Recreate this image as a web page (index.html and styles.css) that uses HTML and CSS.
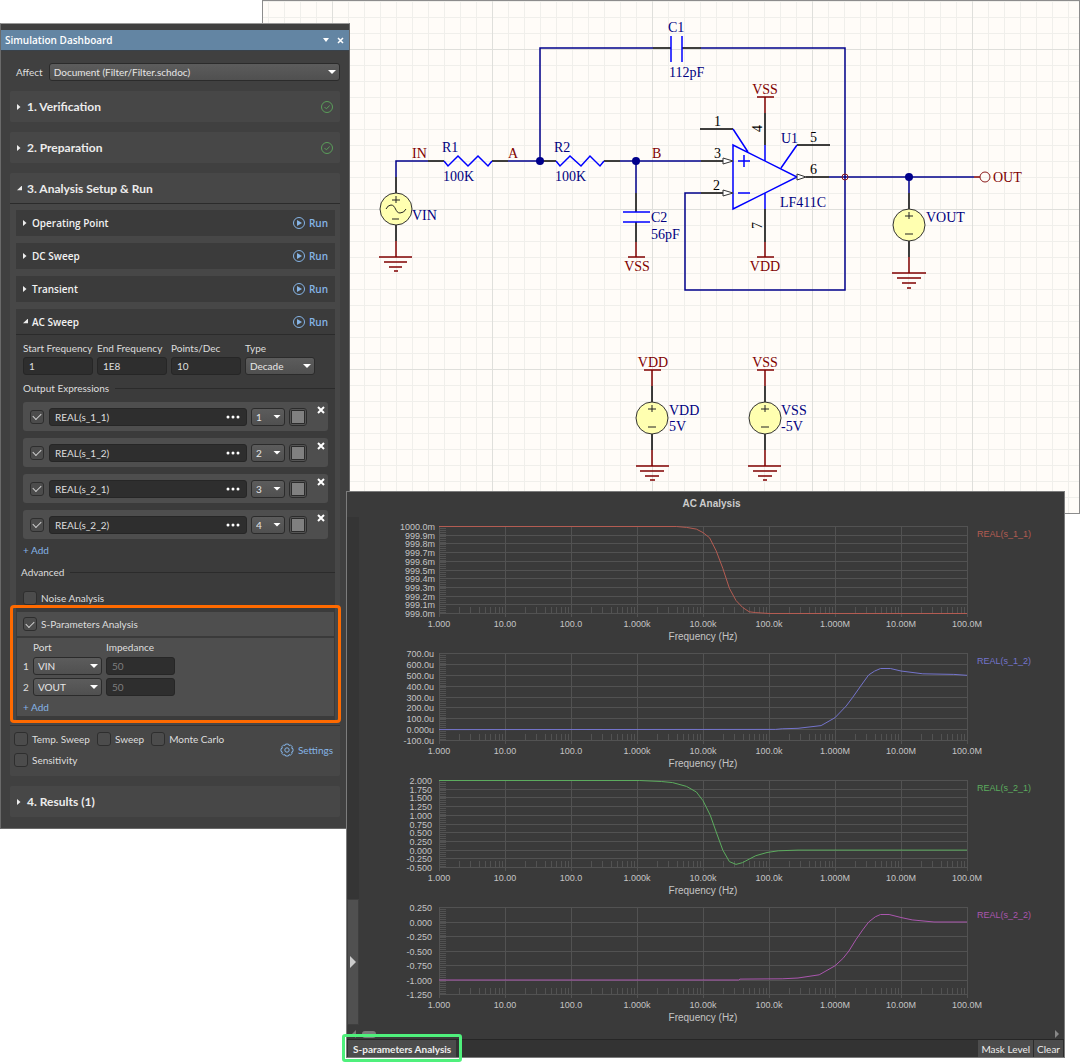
FILE: index.html
```html
<!DOCTYPE html>
<html lang="en">
<head>
<meta charset="utf-8">
<title>Simulation Dashboard</title>
<link rel="stylesheet" href="styles.css">
</head>
<body>
<main class="desktop">

<section class="schematic" aria-label="Schematic">
<svg class="sheet" width="816" height="512" viewBox="263 1 816 512">
  <g class="wire">
    <path d="M396 177V161H428M508 161H540M540 161V48H653M701 48H845V290H685V193H701M620 161H701M636 161V193M829 177H974M909 177V193"/>
  </g>
  <g class="pin">
    <path d="M396 177V193M396 225V241M428 161H444M492 161H508M540 161H556M604 161H620M653 48H671M682 48H701M636 193V212M636 222V242"/>
    <path d="M700 129H733M701 161H723M701 193H723M765 113V145M765 209V242M797 145H830M806 177H829"/>
    <path d="M909 193V209M909 241V257M652 386V402M652 434V450M765 386V402M765 434V450"/>
  </g>
  <g class="part">
    <path d="M444 161L448 166L458 156L468 166L478 156L488 166L492 161"/>
    <path d="M556 161L560 166L570 156L581 166L590 156L600 166L604 161"/>
    <path d="M671 36V62M682 36V62M623 212H650M623 222H650"/>
    <path d="M733 145V209L797 177ZM733 129L748 152M765 145V161M765 193V209M781 168L797 145M738 161H750M744 155V167M738 193H750"/>
  </g>
  <g class="power">
    <path d="M396 241V257M379 257H412M384 262H407M389 267H402M394 271H398"/>
    <path d="M636 242V257M628 257H645M765 113V97M757 97H774M765 242V257M757 257H774M974 177H980"/>
    <path d="M909 257V273M892 273H926M897 278H921M902 283H916M907 288H911"/>
    <path d="M652 386V370M644 370H661M652 450V466M636 466H669M640 471H664M645 476H659M650 480H655"/>
    <path d="M765 386V370M757 370H774M765 450V466M748 466H781M753 471H777M758 476H772M763 480H767"/>
  </g>
  <g class="source">
    <circle cx="396" cy="209" r="16"/><circle cx="909" cy="225" r="16"/><circle cx="652" cy="418" r="16"/><circle cx="765" cy="418" r="16"/>
    <path d="M396 196V203M392 200H400M392 219H399M386 209Q388 205 391 205C396 205 395 213 400 213Q404 213 406 209"/>
    <path d="M909 212V219M905 216H913M905 234H913M652 405V412M648 409H656M648 427H656M765 405V412M761 409H769M761 427H769"/>
  </g>
  <g class="arrow">
    <path d="M723 158L733 161L723 164ZM723 190L733 193L723 196ZM797 174L806 177L797 180Z"/>
  </g>
  <g class="port"><circle cx="985" cy="177" r="5"/><circle cx="845" cy="177" r="3"/></g>
  <g class="dot"><circle cx="540" cy="161" r="4"/><circle cx="636" cy="161" r="4"/><circle cx="909" cy="177" r="4"/></g>
  <g class="name">
    <text x="668" y="32">C1</text><text x="669" y="77">112pF</text>
    <text x="442" y="152">R1</text><text x="443" y="181">100K</text>
    <text x="554" y="152">R2</text><text x="555" y="181">100K</text>
    <text x="412" y="220">VIN</text><text x="651" y="222">C2</text><text x="651" y="239">56pF</text>
    <text x="781" y="143">U1</text><text x="780" y="207">LF411C</text><text x="926" y="222">VOUT</text>
    <text x="669" y="415">VDD</text><text x="669" y="431">5V</text>
    <text x="781" y="415">VSS</text><text x="781" y="431">-5V</text>
  </g>
  <g class="net">
    <text x="412" y="158">IN</text><text x="508" y="158">A</text><text x="652" y="158">B</text>
    <text x="993" y="182">OUT</text>
    <g text-anchor="middle">
      <text x="637" y="271">VSS</text><text x="765" y="94">VSS</text><text x="765" y="271">VDD</text>
      <text x="653" y="367">VDD</text><text x="765" y="367">VSS</text>
    </g>
  </g>
  <g class="pin-no">
    <text x="714" y="126">1</text><text x="714" y="158">3</text><text x="713" y="190">2</text>
    <text x="810" y="142">5</text><text x="810" y="174">6</text>
    <text transform="translate(762 132) rotate(-90)">4</text>
    <text transform="translate(762 229) rotate(-90)">7</text>
  </g>
</svg>
</section>

<section class="dashboard">
  <header class="titlebar">
    <h1>Simulation Dashboard</h1>
    <button class="plain" aria-label="Panel menu"><svg width="8" height="8"><path d="M1 2H7L4 6Z" fill="#fff"/></svg></button>
    <button class="plain" aria-label="Close panel"><svg width="8" height="8"><path d="M2 2L7 7M7 2L2 7" stroke="#fff" stroke-width="1.5"/></svg></button>
  </header>

  <div class="stack">
    <div class="affect">
      <label for="affect">Affect</label>
      <span class="select wide"><select id="affect"><option>Document (Filter/Filter.schdoc)</option></select></span>
    </div>

    <div class="section"><button class="head"><i class="closed"></i><span>1. Verification</span>
      <svg width="14" height="14" class="ok"><circle cx="7" cy="7" r="5.5"/><path d="M4.5 7L6.3 8.8L9.7 5.6"/></svg></button></div>
    <div class="section"><button class="head"><i class="closed"></i><span>2. Preparation</span>
      <svg width="14" height="14" class="ok"><circle cx="7" cy="7" r="5.5"/><path d="M4.5 7L6.3 8.8L9.7 5.6"/></svg></button></div>

    <div class="section">
      <button class="head lined"><i class="open"></i><span>3. Analysis Setup &amp; Run</span></button>
      <div class="analyses">
        <div class="item"><div class="item-head"><i class="closed"></i><h3>Operating Point</h3><button class="run"><svg width="14" height="14"><circle cx="7" cy="7" r="5.5"/><path d="M5 4L10 7L5 10Z"/></svg>Run</button></div></div>
        <div class="item"><div class="item-head"><i class="closed"></i><h3>DC Sweep</h3><button class="run"><svg width="14" height="14"><circle cx="7" cy="7" r="5.5"/><path d="M5 4L10 7L5 10Z"/></svg>Run</button></div></div>
        <div class="item"><div class="item-head"><i class="closed"></i><h3>Transient</h3><button class="run"><svg width="14" height="14"><circle cx="7" cy="7" r="5.5"/><path d="M5 4L10 7L5 10Z"/></svg>Run</button></div></div>
        <div class="item">
          <div class="item-head lined"><i class="open"></i><h3>AC Sweep</h3><button class="run"><svg width="14" height="14"><circle cx="7" cy="7" r="5.5"/><path d="M5 4L10 7L5 10Z"/></svg>Run</button></div>
          <div class="fields">
            <div class="field"><label for="start">Start Frequency</label><input class="text" id="start" value="1"></div>
            <div class="field"><label for="end">End Frequency</label><input class="text" id="end" value="1E8"></div>
            <div class="field"><label for="points">Points/Dec</label><input class="text" id="points" value="10"></div>
            <div class="field"><label for="type">Type</label><span class="select"><select id="type"><option>Decade</option></select></span></div>
          </div>
          <h4 class="rule">Output Expressions</h4>
          <div class="exprs">
            <div class="expr"><input type="checkbox" checked aria-label="Use expression 1"><span class="combo"><input aria-label="Expression 1" value="REAL(s_1_1)"><button class="plain" aria-label="Edit expression 1"><svg width="14" height="4"><circle cx="2" cy="2" r="1.5"/><circle cx="7" cy="2" r="1.5"/><circle cx="12" cy="2" r="1.5"/></svg></button></span><span class="select small"><select aria-label="Plot 1"><option>1</option></select></span><button class="swatch" aria-label="Color 1"></button><button class="plain remove" aria-label="Remove expression 1"><svg width="10" height="10"><path d="M2 2L8 8M8 2L2 8"/></svg></button></div>
            <div class="expr"><input type="checkbox" checked aria-label="Use expression 2"><span class="combo"><input aria-label="Expression 2" value="REAL(s_1_2)"><button class="plain" aria-label="Edit expression 2"><svg width="14" height="4"><circle cx="2" cy="2" r="1.5"/><circle cx="7" cy="2" r="1.5"/><circle cx="12" cy="2" r="1.5"/></svg></button></span><span class="select small"><select aria-label="Plot 2"><option>2</option></select></span><button class="swatch" aria-label="Color 2"></button><button class="plain remove" aria-label="Remove expression 2"><svg width="10" height="10"><path d="M2 2L8 8M8 2L2 8"/></svg></button></div>
            <div class="expr"><input type="checkbox" checked aria-label="Use expression 3"><span class="combo"><input aria-label="Expression 3" value="REAL(s_2_1)"><button class="plain" aria-label="Edit expression 3"><svg width="14" height="4"><circle cx="2" cy="2" r="1.5"/><circle cx="7" cy="2" r="1.5"/><circle cx="12" cy="2" r="1.5"/></svg></button></span><span class="select small"><select aria-label="Plot 3"><option>3</option></select></span><button class="swatch" aria-label="Color 3"></button><button class="plain remove" aria-label="Remove expression 3"><svg width="10" height="10"><path d="M2 2L8 8M8 2L2 8"/></svg></button></div>
            <div class="expr"><input type="checkbox" checked aria-label="Use expression 4"><span class="combo"><input aria-label="Expression 4" value="REAL(s_2_2)"><button class="plain" aria-label="Edit expression 4"><svg width="14" height="4"><circle cx="2" cy="2" r="1.5"/><circle cx="7" cy="2" r="1.5"/><circle cx="12" cy="2" r="1.5"/></svg></button></span><span class="select small"><select aria-label="Plot 4"><option>4</option></select></span><button class="swatch" aria-label="Color 4"></button><button class="plain remove" aria-label="Remove expression 4"><svg width="10" height="10"><path d="M2 2L8 8M8 2L2 8"/></svg></button></div>
          </div>
          <button class="add">+ Add</button>
          <h4 class="rule advanced">Advanced</h4>
          <label class="check noise"><input type="checkbox">Noise Analysis</label>
          <div class="sparams">
            <div class="sparams-head"><label class="check"><input type="checkbox" checked>S-Parameters Analysis</label></div>
            <div class="sparams-body">
              <div class="ports">
                <span></span><label for="port1">Port</label><label for="imp1">Impedance</label>
                <span>1</span><span class="select"><select id="port1"><option>VIN</option></select></span><input class="text" id="imp1" placeholder="50">
                <span>2</span><span class="select"><select aria-label="Port 2"><option>VOUT</option></select></span><input class="text" aria-label="Impedance 2" placeholder="50">
              </div>
              <button class="add">+ Add</button>
            </div>
          </div>
        </div>
      </div>
      <div class="modes">
        <div class="mode-list">
          <label class="check"><input type="checkbox">Temp. Sweep</label>
          <label class="check"><input type="checkbox">Sweep</label>
          <label class="check"><input type="checkbox">Monte Carlo</label>
          <label class="check"><input type="checkbox">Sensitivity</label>
        </div>
        <button class="settings"><svg width="14" height="14"><path d="M5.6 1.1H8.4L9 2.5L10.4 1.9L12.3 3.8L11.6 5.2L13 5.7V8.4L11.6 9L12.3 10.3L10.3 12.2L9 11.6L8.4 13H5.6L5 11.6L3.7 12.2L1.8 10.3L2.4 9L1 8.4V5.7L2.4 5.1L1.8 3.8L3.7 1.9L5 2.5Z"/><circle cx="7" cy="7" r="2.2"/></svg>Settings</button>
      </div>
    </div>

    <div class="section"><button class="head"><i class="closed"></i><span>4. Results (1)</span></button></div>
  </div>
</section>

<section class="analysis">
  <div class="analysis-body">
    <div class="side"><button class="side-thumb" aria-label="Expand"><svg width="8" height="12"><path d="M1 0L7 6L1 12Z" fill="#ccc"/></svg></button></div>
    <div class="plots">
      <h2>AC Analysis</h2>
      <svg class="plot" id="plot1"></svg>
      <svg class="plot" id="plot2"></svg>
      <svg class="plot" id="plot3"></svg>
      <svg class="plot" id="plot4"></svg>
    </div>
  </div>
  <div class="hscroll"><svg width="6" height="8"><path d="M5 0L1 4L5 8Z" fill="#777"/></svg><span class="thumb"></span><svg width="6" height="8"><path d="M1 0L5 4L1 8Z" fill="#888"/></svg></div>
  <footer class="tabs">
    <div class="tab-mark"><button class="tab">S-parameters Analysis</button></div>
    <div class="tools"><button>Mask Level</button><button>Clear</button></div>
  </footer>
</section>

</main>
<script src="plots.js"></script>
</body>
</html>
```
FILE: styles.css
```css
* { box-sizing: border-box; }
body { margin: 0; background: #fff; font: 10px/14px Lato, "Open Sans", sans-serif; color: #dedede; }
button, input, select { font: inherit; color: inherit; margin: 0; padding: 0; border: 0; background: none; }
button { cursor: pointer; }
h1, h2, h3, h4 { margin: 0; font-size: 10px; line-height: 14px; }
h1, h3 { font-family: "Open Sans", sans-serif; font-weight: 600; }
svg { display: block; flex: none; }
.desktop { position: relative; min-height: 1062px; overflow: hidden; }

/* schematic window */
.schematic {
  position: absolute; left: 262px; right: 0; top: 0; overflow: hidden; border: 1px solid #8c8c8c;
  background-color: #fffcf8;
  background-image:
    linear-gradient(90deg, #dfdfdb 1px, transparent 1px), linear-gradient(#dfdfdb 1px, transparent 1px),
    linear-gradient(90deg, #f0efeb 1px, transparent 1px), linear-gradient(#f0efeb 1px, transparent 1px);
  background-size: 160px 160px, 160px 160px, 16px 16px, 16px 16px;
  background-position: 69px 0, 0 48px, 5px 0, 0 0;
}
.sheet { font: 14px "Liberation Serif", serif; }
.sheet path, .sheet circle { fill: none; stroke-width: 1.5; }
.wire { stroke: #00008b; }
.pin { stroke: #000; }
.part { stroke: #0000ff; }
.power { stroke: #800000; }
.sheet .source circle { fill: #ffffb0; stroke: #333; stroke-width: 1; }
.sheet .source path { stroke: #222; stroke-width: 1; }
.sheet .arrow path { fill: #fff; stroke: #333; stroke-width: 1; }
.sheet .port circle { stroke: #8b1a1a; stroke-width: 1; }
.sheet .dot circle { fill: #00008b; }
.name { fill: #000080; }
.net { fill: #800000; }
.pin-no { fill: #000; }

/* dashboard window */
.dashboard {
  position: absolute; left: 0; top: 23px; width: 350px; padding-top: 6px;
  background: #404040; border: 1px solid #6a6a6a; border-top-color: #999;
}
.titlebar { display: flex; align-items: center; gap: 6px; height: 21px; padding: 0 5px 0 4px; background: #6385a3; border-bottom: 1px solid #39424b; color: #fff; }
.titlebar h1 { flex: 1; }
.stack { display: flex; flex-direction: column; gap: 10px; padding: 12px 9px 11px; }
.affect { display: flex; align-items: center; gap: 6px; padding-left: 6px; }
.wide { flex: 1; }

.select { position: relative; display: block; }
.select select { appearance: none; display: block; width: 100%; height: 18px; padding: 0 4px; border: 1px solid #2b2b2b; border-radius: 3px; background: linear-gradient(#5c5c5c, #505050); color: #e6e6e6; }
.select::after { content: ""; position: absolute; right: 4px; top: 7px; width: 8px; height: 4px; background: #fff; clip-path: polygon(0 0, 100% 0, 50% 100%); pointer-events: none; }
.text { width: 100%; height: 18px; padding: 0 5px; border: 1px solid #262626; border-radius: 3px; background: #2e2e2e; }
.text::placeholder { color: #7d7d7d; opacity: 1; }
input[type="checkbox"] { appearance: none; flex: none; display: grid; place-items: center; width: 14px; height: 14px; border: 1px solid #2e2e2e; border-radius: 3px; background: #4c4c4c; }
input[type="checkbox"]:checked::after { content: ""; width: 7px; height: 4px; margin-top: -2px; border: solid #d0d0d0; border-width: 0 0 1px 1px; transform: rotate(-45deg); }
.check { display: flex; align-items: center; gap: 4px; }

.section { background: #474747; border-radius: 2px; }
.head { display: flex; align-items: center; gap: 5px; width: 100%; height: 31px; padding: 1px 6px 0 7px; font-size: 12px; font-weight: 700; line-height: 16px; text-align: left; color: #ececec; }
.head span { flex: 1; }
.head .ok { fill: none; stroke: #5a9e5a; stroke-width: 1; }
.lined { border-bottom: 1px solid #2b2b2b; }
i { flex: none; width: 5px; height: 6px; background: #eee; }
.closed { clip-path: polygon(0 0, 70% 50%, 0 100%); }
.open { clip-path: polygon(100% 0, 100% 80%, 0 80%); }
.analyses { display: flex; flex-direction: column; gap: 7px; padding: 6px 5px 2px 6px; }
.item { background: #3b3b3b; }
.item-head { display: flex; align-items: center; gap: 4px; height: 26px; padding: 0 7px; color: #f2f2f2; }
.item-head h3 { flex: 1; }
.run { display: flex; align-items: center; gap: 3px; font-family: "Open Sans", sans-serif; font-weight: 600; color: #85b4e6; }
.run svg, .settings svg { fill: none; stroke: #85b4e6; }
.run path { fill: #85b4e6; stroke: none; }
.add { display: block; color: #85b4e6; }

.fields { display: grid; grid-template-columns: repeat(4, 70px); gap: 4px; padding: 6px 7px 0; }
.field { display: grid; gap: 2px; white-space: nowrap; }
.rule { display: flex; align-items: center; gap: 6px; padding: 6px 0 0 7px; font-weight: 400; }
.rule::after { content: ""; flex: 1; height: 1px; background: #2b2b2b; }
.exprs { display: flex; flex-direction: column; gap: 7px; padding: 7px 7px 4px; }
.expr { display: flex; align-items: center; gap: 4px; height: 29px; padding: 0 2px 0 7px; border-radius: 3px; background: #4e4e4e; }
.combo { display: flex; flex: 1; align-items: center; height: 18px; margin-left: 1px; padding: 0 6px 0 5px; border: 1px solid #262626; border-radius: 3px; background: #2e2e2e; }
.combo input { flex: 1; min-width: 0; }
.combo svg { fill: #fff; }
.small { width: 34px; }
.swatch { width: 18px; height: 18px; border: 1px solid #2b2b2b; border-radius: 3px; background: #808080; box-shadow: inset 0 0 0 1px #555, inset 0 0 0 2px #2b2b2b; }
.remove { align-self: flex-start; margin: 3px 0 0 5px; }
.remove path { stroke: #fff; stroke-width: 2; }
.item > .add { margin-left: 7px; }
.advanced { padding: 8px 0 0 5px; }
.noise { padding: 12px 7px 0; }
.sparams { margin: 0 -6px; padding: 4px; border: 3px solid #ff6a00; border-radius: 4px; }
.sparams-head { padding: 5px 6px; background: #4e4e4e; border-bottom: 2px solid #3a3a3a; }
.sparams-body { padding: 2px 6px; background: #4e4e4e; }
.ports { display: grid; grid-template-columns: 6px 69px 69px; gap: 3px 4px; align-items: center; margin-bottom: 4px; }
.modes { display: flex; align-items: center; justify-content: space-between; padding: 6px 7px 9px 4px; border-top: 1px solid #333; }
.mode-list { display: flex; flex-wrap: wrap; gap: 7px; width: 230px; }
.settings { display: flex; align-items: center; gap: 4px; color: #85b4e6; }

/* analysis window */
.analysis { position: absolute; left: 346px; right: 15px; top: 491px; background: #3a3a3a; border: 1px solid #7c7c7c; font-family: "Liberation Sans", sans-serif; }
.analysis-body { display: flex; }
.side { display: flex; flex-direction: column; justify-content: flex-end; width: 12px; margin: 25px 0 4px; background: #353535; }
.side-thumb { display: grid; place-items: center; height: 126px; border: 1px solid #3f3f3f; background: #505050; }
.plots { flex: 1; min-width: 0; padding-top: 5px; }
.plots h2 { text-align: center; margin-bottom: 10px; color: #ccc; }
.plot { width: 100%; height: 127px; font-size: 9px; fill: #c4c4c4; }
.plot .grid { stroke: #525252; fill: none; }
.plot .curve { fill: none; stroke: var(--c); }
.plot .legend { fill: var(--c); }
.plot .axis { font-size: 10px; }
#plot1 { --c: #b45c52; }
#plot2 { --c: #7474cc; }
#plot3 { --c: #5cac5e; }
#plot4 { --c: #aa56ae; }
.hscroll { display: flex; align-items: center; gap: 5px; height: 10px; padding: 0 4px; }
.hscroll .thumb { width: 14px; height: 7px; margin-right: auto; border-radius: 3px; background: #7a7a7a; }
.tabs { display: flex; justify-content: space-between; height: 18px; border-top: 1px solid #262626; background: #333; font-family: Lato, "Open Sans", sans-serif; color: #eee; }
.tab-mark { margin: -6px 0 -5px -5px; padding: 3px; border: 3px solid #4ff07c; border-radius: 3px; }
.tab { height: 17px; padding: 0 5px; background: #4c4c4c; font-weight: 700; }
.tools { display: flex; }
.tools button { padding: 0 3px; background: #4c4c4c; border-right: 1px solid #2b2b2b; }
```
FILE: plots.js
```js
// Each series is a list of [log10(frequency), value] points.
const plots = [
  { id: 'plot1', name: 'REAL(s_1_1)', max: 1000, min: 999, gap: 4,
    labels: ['1000.0m', '999.9m', '999.8m', '999.7m', '999.6m', '999.5m', '999.4m', '999.3m', '999.2m', '999.1m', '999.0m'],
    data: [[0,1000],[3.6,1000],[3.75,999.99],[3.9,999.97],[4,999.93],[4.1,999.87],[4.2,999.72],[4.3,999.52],[4.4,999.29],[4.5,999.15],[4.6,999.07],[4.7,999.02],[4.8,999.01],[5,999],[8,999]] },
  { id: 'plot2', name: 'REAL(s_1_2)', max: 700, min: -100, gap: 5,
    labels: ['700.0u', '600.0u', '500.0u', '400.0u', '300.0u', '200.0u', '100.0u', '0.000u', '-100.0u'],
    data: [[0,0],[5.1,2],[5.2,8],[5.44,12],[5.79,37],[6,110],[6.17,217],[6.27,298],[6.4,410],[6.51,503],[6.6,538],[6.69,562],[6.84,562],[7,539],[7.33,513],[7.8,508],[8,500]] },
  { id: 'plot3', name: 'REAL(s_2_1)', max: 2, min: -0.5, gap: 7,
    labels: ['2.000', '1.750', '1.500', '1.250', '1.000', '0.750', '0.500', '0.250', '0.000', '-0.250', '-0.500'],
    data: [[0,2],[3.04,2],[3.37,1.97],[3.54,1.94],[3.75,1.83],[3.9,1.67],[4,1.42],[4.11,1],[4.2,.52],[4.3,0],[4.4,-.33],[4.5,-.41],[4.6,-.36],[4.7,-.26],[4.8,-.16],[4.97,-.07],[5.14,-.02],[5.44,0],[8,0]] },
  { id: 'plot4', name: 'REAL(s_2_2)', max: 0.25, min: -1.25, gap: 7,
    labels: ['0.250', '0.000', '-0.250', '-0.500', '-0.750', '-1.000', '-1.250'],
    data: [[0,-1],[4.54,-1],[4.56,-.985],[5.2,-.98],[5.44,-.965],[5.76,-.91],[6,-.756],[6.12,-.63],[6.21,-.5],[6.32,-.3],[6.42,-.137],[6.51,0],[6.61,.09],[6.69,.13],[6.82,.13],[7,.077],[7.17,.037],[7.5,0],[8,0]] }
];
const decades = ['1.000', '10.00', '100.0', '1.000k', '10.00k', '100.0k', '1.000M', '10.00M', '100.0M'];

function draw(p) {
  const svg = document.getElementById(p.id);
  const left = 80, top = 5, height = 87, bottom = top + height;
  const step = Math.floor((svg.clientWidth - left - 97) / 8);
  const right = left + step * 8;
  const rows = p.labels.length - 1;
  const rowY = i => top + Math.round(i * height / rows);
  let grid = '';
  for (let i = 0; i <= rows; i++) grid += `M${left} ${rowY(i) + .5}H${right}`;
  for (let d = 0; d <= 8; d++) {
    grid += `M${left + d * step + .5} ${top}V${bottom + 4}`;
    for (let k = 2; k < 10 && d < 8; k++) {
      grid += `M${Math.round(left + (d + Math.log10(k)) * step) + .5} ${bottom - 6}V${bottom}`;
    }
  }
  for (let y = top + 2; y < bottom; y += 2) grid += `M${left} ${y + .5}H${left + 7}`;
  const line = p.data.map(([f, v]) =>
    `${(left + f * step).toFixed(1)},${(top + .5 + (p.max - v) / (p.max - p.min) * height).toFixed(1)}`).join(' ');
  svg.innerHTML = `<path class="grid" d="${grid}"/><polyline class="curve" points="${line}"/>` +
    p.labels.map((t, i) => `<text x="${left - p.gap}" y="${rowY(i) + 4}" text-anchor="end">${t}</text>`).join('') +
    decades.map((t, d) => `<text x="${left + d * step}" y="${bottom + 14}" text-anchor="middle">${t}</text>`).join('') +
    `<text class="axis" x="${left + step * 4}" y="${bottom + 27}" text-anchor="middle">Frequency (Hz)</text>` +
    `<text class="legend" x="${right + 10}" y="${top + 11}">${p.name}</text>`;
}
function drawAll() { plots.forEach(draw); }
drawAll();
addEventListener('resize', drawAll);
```
